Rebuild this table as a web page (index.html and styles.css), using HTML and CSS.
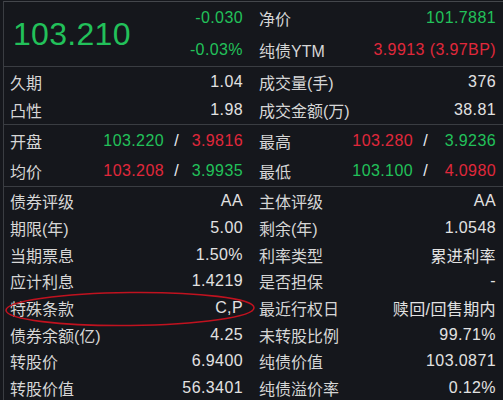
FILE: index.html
```html
<!DOCTYPE html>
<html lang="zh-CN">
<head>
    <meta charset="UTF-8">
    <title>可转债行情</title>
    <link rel="stylesheet" href="styles.css">
</head>
<body>
    <div class="panel">
        <!-- 最新价 / 涨跌 -->
        <div class="sec head">
            <div class="col price-cell">
                <span class="last up">103.210</span>
                <div class="chg">
                    <span class="up">-0.030</span>
                    <span class="up">-0.03%</span>
                </div>
            </div>
            <div class="col right">
                <div class="row r32"><span class="lbl">净价</span><span class="val up">101.7881</span></div>
                <div class="row r32"><span class="lbl">纯债YTM</span><span class="val down">3.9913 (3.97BP)</span></div>
            </div>
        </div>

        <div class="sec mid">
            <div class="col left">
                <div class="row r29"><span class="lbl">久期</span><span class="val">1.04</span></div>
                <div class="row r28"><span class="lbl">凸性</span><span class="val">1.98</span></div>
            </div>
            <div class="col right">
                <div class="row r29"><span class="lbl">成交量(手)</span><span class="val">376</span></div>
                <div class="row r28"><span class="lbl">成交金额(万)</span><span class="val">38.81</span></div>
            </div>
        </div>

        <!-- 价格 / 收益率 -->
        <div class="sec ohlc">
            <div class="col left">
                <div class="row r30 pair"><span class="lbl">开盘</span><span class="px up">103.220</span><span class="sl">/</span><span class="yd down">3.9816</span></div>
                <div class="row r30 pair"><span class="lbl">均价</span><span class="px down">103.208</span><span class="sl">/</span><span class="yd up">3.9935</span></div>
            </div>
            <div class="col right">
                <div class="row r30 pair"><span class="lbl">最高</span><span class="px down">103.280</span><span class="sl">/</span><span class="yd up">3.9236</span></div>
                <div class="row r30 pair"><span class="lbl">最低</span><span class="px up">103.100</span><span class="sl">/</span><span class="yd down">4.0980</span></div>
            </div>
        </div>

        <div class="sec info">
            <div class="col left">
                <div class="row rs"><span class="lbl">债券评级</span><span class="val">AA</span></div>
                <div class="row rs"><span class="lbl">期限(年)</span><span class="val">5.00</span></div>
                <div class="row rs"><span class="lbl">当期票息</span><span class="val">1.50%</span></div>
                <div class="row rs"><span class="lbl">应计利息</span><span class="val">1.4219</span></div>
                <div class="row rs"><span class="lbl">特殊条款</span><span class="val">C,P</span></div>
                <div class="row rs"><span class="lbl">债券余额(亿)</span><span class="val">4.25</span></div>
                <div class="row rs"><span class="lbl">转股价</span><span class="val">6.9400</span></div>
                <div class="row rs"><span class="lbl">转股价值</span><span class="val">56.3401</span></div>
            </div>
            <div class="col right">
                <div class="row rs"><span class="lbl">主体评级</span><span class="val">AA</span></div>
                <div class="row rs"><span class="lbl">剩余(年)</span><span class="val">1.0548</span></div>
                <div class="row rs"><span class="lbl">利率类型</span><span class="val">累进利率</span></div>
                <div class="row rs"><span class="lbl">是否担保</span><span class="val">-</span></div>
                <div class="row rs"><span class="lbl">最近行权日</span><span class="val">赎回/回售期内</span></div>
                <div class="row rs"><span class="lbl">未转股比例</span><span class="val">99.71%</span></div>
                <div class="row rs"><span class="lbl">纯债价值</span><span class="val">103.0871</span></div>
                <div class="row rs"><span class="lbl">纯债溢价率</span><span class="val">0.12%</span></div>
            </div>
        </div>
    </div>

    <!-- 手画的红圈 -->
    <svg class="mark" width="270" height="50" viewBox="0 0 270 50">
        <ellipse cx="130" cy="24" rx="124" ry="16.5" fill="none" stroke="#c0121f" stroke-width="1.6" transform="rotate(-0.6 130 24)"/>
    </svg>
</body>
</html>
```

FILE: styles.css
```css
/* 深色行情面板 */
body {
    margin: 0;
    background-color: #15171c;
    font-family: 'Liberation Sans', 'Noto Sans CJK SC', sans-serif;
    font-size: 16px;
    color: #dcdcdc;
    overflow: hidden;
}

.panel {
    margin: 1px 0 0 3px;
    border-top: 1px solid #44474c;
    border-left: 1px solid #3a3d42;
    height: 400px;
}

.sec {
    display: grid;
    grid-template-columns: 248px 1fr;
    border-bottom: 1px solid #3a3d42;
}

.col.left {
    padding: 0 9px 0 6px;
}

.col.right {
    padding: 0 7px;
}

.row {
    display: flex;
    align-items: center;
    justify-content: space-between;
    white-space: nowrap;
}

.r32 { height: 32px; }
.r30 { height: 30px; }
.r29 { height: 29px; }
.r28 { height: 28px; }
.rs  { height: 26.7px; }

.ohlc { padding-top: 1px; }
.info { padding-top: 1px; border-bottom: none; }

.lbl {
    color: #d6d6d6;
}

.val {
    color: #e2e2e2;
    letter-spacing: 0.4px;
}

.up   { color: #22c15a; }
.down { color: #e0283b; }

/* 开盘 / 最高 行 */
.pair {
    justify-content: flex-start;
}

.pair .lbl {
    width: 64px;
}

.pair .px {
    width: 90px;
    text-align: right;
    letter-spacing: 0.4px;
}

.pair .sl {
    width: 25px;
    text-align: center;
    color: #e8ecf2;
}

.pair .yd {
    flex: 1;
    text-align: right;
    letter-spacing: 0.4px;
}

/* 最新价 */
.price-cell {
    display: flex;
    justify-content: space-between;
    align-items: center;
    padding: 0 9px 0 9px;
    height: 64px;
}

.last {
    font-size: 32px;
    letter-spacing: 0.3px;
}

.chg {
    display: flex;
    flex-direction: column;
    align-items: flex-end;
    justify-content: space-around;
    height: 64px;
    letter-spacing: 0.4px;
}

.mark {
    position: absolute;
    left: 0;
    top: 285px;
}
```
